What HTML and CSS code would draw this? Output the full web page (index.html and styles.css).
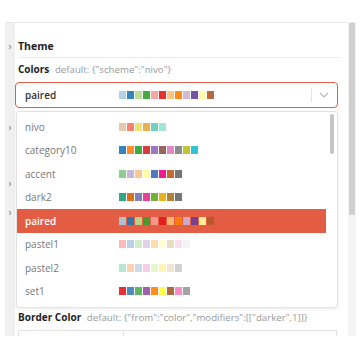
FILE: index.html
```html
<!DOCTYPE html>
<html lang="en">
<head>
    <meta charset="UTF-8">
    <meta name="viewport" content="width=device-width, initial-scale=1.0">
    <title>Theme colors</title>
    <link rel="stylesheet" href="styles.css">
</head>
<body>

    <div class="panel">
        <div class="gutter">
            <span class="arrow a1">›</span>
            <span class="arrow a2">›</span>
            <span class="arrow a3">›</span>
            <span class="arrow a4">›</span>
        </div>

        <div class="content">
            <div class="section-title">Theme</div>

            <div class="field">
                <div class="field-label">Colors <span class="default">default: {"scheme":"nivo"}</span></div>

                <div class="select">
                    <span class="select-value">paired</span>
                    <span class="swatches">
                        <i style="background:#a6cee3"></i><i style="background:#1f78b4"></i><i style="background:#b2df8a"></i><i style="background:#33a02c"></i><i style="background:#fb9a99"></i><i style="background:#e31a1c"></i><i style="background:#fdbf6f"></i><i style="background:#ff7f00"></i><i style="background:#cab2d6"></i><i style="background:#6a3d9a"></i><i style="background:#ffff99"></i><i style="background:#b15928"></i>
                    </span>
                    <span class="select-sep"></span>
                    <svg class="chevron" width="10" height="6" viewBox="0 0 10 6"><path d="M1 1l4 4 4-4" fill="none" stroke="#bbb" stroke-width="1.2"/></svg>
                </div>

                <div class="menu">
                    <div class="menu-list">
                        <div class="option"><span class="name">nivo</span><span class="swatches"><i style="background:#e8c1a0"></i><i style="background:#f47560"></i><i style="background:#f1e15b"></i><i style="background:#e8a838"></i><i style="background:#61cdbb"></i><i style="background:#97e3d5"></i></span></div>
                        <div class="option"><span class="name">category10</span><span class="swatches"><i style="background:#1f77b4"></i><i style="background:#ff7f0e"></i><i style="background:#2ca02c"></i><i style="background:#d62728"></i><i style="background:#9467bd"></i><i style="background:#8c564b"></i><i style="background:#e377c2"></i><i style="background:#7f7f7f"></i><i style="background:#bcbd22"></i><i style="background:#17becf"></i></span></div>
                        <div class="option"><span class="name">accent</span><span class="swatches"><i style="background:#7fc97f"></i><i style="background:#beaed4"></i><i style="background:#fdc086"></i><i style="background:#ffff99"></i><i style="background:#386cb0"></i><i style="background:#f0027f"></i><i style="background:#bf5b17"></i><i style="background:#666666"></i></span></div>
                        <div class="option"><span class="name">dark2</span><span class="swatches"><i style="background:#1b9e77"></i><i style="background:#d95f02"></i><i style="background:#7570b3"></i><i style="background:#e7298a"></i><i style="background:#66a61e"></i><i style="background:#e6ab02"></i><i style="background:#a6761d"></i><i style="background:#666666"></i></span></div>
                        <div class="option selected"><span class="name">paired</span><span class="swatches"><i style="background:#a6cee3"></i><i style="background:#1f78b4"></i><i style="background:#b2df8a"></i><i style="background:#33a02c"></i><i style="background:#fb9a99"></i><i style="background:#e31a1c"></i><i style="background:#fdbf6f"></i><i style="background:#ff7f00"></i><i style="background:#cab2d6"></i><i style="background:#6a3d9a"></i><i style="background:#ffff99"></i><i style="background:#b15928"></i></span></div>
                        <div class="option"><span class="name">pastel1</span><span class="swatches"><i style="background:#fbb4ae"></i><i style="background:#b3cde3"></i><i style="background:#ccebc5"></i><i style="background:#decbe4"></i><i style="background:#fed9a6"></i><i style="background:#ffffcc"></i><i style="background:#e5d8bd"></i><i style="background:#fddaec"></i><i style="background:#f2f2f2"></i></span></div>
                        <div class="option"><span class="name">pastel2</span><span class="swatches"><i style="background:#b3e2cd"></i><i style="background:#fdcdac"></i><i style="background:#cbd5e8"></i><i style="background:#f4cae4"></i><i style="background:#e6f5c9"></i><i style="background:#fff2ae"></i><i style="background:#f1e2cc"></i><i style="background:#cccccc"></i></span></div>
                        <div class="option"><span class="name">set1</span><span class="swatches"><i style="background:#e41a1c"></i><i style="background:#377eb8"></i><i style="background:#4daf4a"></i><i style="background:#984ea3"></i><i style="background:#ff7f00"></i><i style="background:#ffff33"></i><i style="background:#a65628"></i><i style="background:#f781bf"></i><i style="background:#999999"></i></span></div>
                    </div>
                    <div class="menu-scroll"><div class="menu-thumb"></div></div>
                </div>
            </div>

            <!-- fields hidden under the open menu -->
            <div class="hidden-fields"></div>

            <div class="field-label">Border Color <span class="default">default: {"from":"color","modifiers":[["darker",1]]}</span></div>
            <div class="border-controls">
                <div class="control small"></div>
                <div class="control wide"></div>
            </div>
        </div>

        <div class="scrollbar"><div class="thumb"></div></div>
    </div>

</body>
</html>
```

FILE: styles.css
```css
body {
    margin: 0;
    background: #fff;
    font-family: "Open Sans", Arial, sans-serif;
}

.panel {
    display: flex;
    margin: 22px 0 0 5px;
    width: 351px;
    height: 313px;
    border-top: 1px solid #e8e8e8;
    overflow: hidden;
}

.gutter {
    width: 10px;
    background: #f0f0f0;
    display: flex;
    flex-direction: column;
    align-items: center;
    color: #777;
    font-size: 10px;
    line-height: 10px;
}

.arrow.a1 { margin-top: 18px; }
.arrow.a2 { margin-top: 71px; }
.arrow.a3 { margin-top: 46px; }
.arrow.a4 { margin-top: 19px; }

.content {
    flex: 1;
    padding: 0 0 0 3px;
}

.section-title {
    height: 34px;
    line-height: 46px;
    font-size: 10.5px;
    font-weight: 700;
    color: #222;
    border-bottom: 1px solid #ececec;
    margin-right: 6px;
}

.field {
    position: relative;
}

.field-label {
    font-size: 10px;
    font-weight: 700;
    color: #222;
    line-height: 14px;
}

.field .field-label {
    margin-top: 4px;
}

.default {
    font-size: 9.7px;
    font-weight: 400;
    color: #9a9a9a;
    margin-left: 3px;
}

.select {
    display: flex;
    align-items: center;
    height: 24px;
    margin: 5px 0 0 -3px;
    width: 321px;
    border: 1px solid #e25d47;
    border-radius: 4px;
    font-size: 10px;
    font-weight: 600;
    color: #333;
}

.select-value {
    width: 94px;
    padding-left: 9px;
}

.select-sep {
    margin-left: auto;
    width: 1px;
    height: 14px;
    background: #e4e4e4;
}

.chevron {
    margin: 0 8px 0 7px;
}

.swatches {
    display: flex;
}

.swatches i {
    width: 7px;
    height: 8px;
    margin-right: 1px;
    opacity: 0.9;
}

.menu {
    position: absolute;
    top: 49px;
    left: -2px;
    width: 322px;
    height: 197px;
    display: flex;
    background: #fff;
    border: 1px solid #e2e2e2;
    border-radius: 3px;
    box-shadow: 0 1px 4px rgba(0, 0, 0, 0.08);
    box-sizing: border-box;
}

.menu-list {
    flex: 1;
    padding-top: 3px;
}

.option {
    display: flex;
    align-items: center;
    height: 23.5px;
    font-size: 10px;
    color: #777;
}

.option .name {
    width: 94px;
    padding-left: 8px;
}

.option.selected {
    background: #e35c44;
    color: #fff;
    font-weight: 600;
}

.menu-scroll {
    width: 11px;
    padding-top: 2px;
    display: flex;
    justify-content: center;
}

.menu-thumb {
    width: 4px;
    height: 40px;
    border-radius: 2px;
    background: #c4c4c4;
}

.hidden-fields {
    height: 202px;
}

.border-controls {
    display: flex;
    margin-top: 5px;
    width: 319px;
}

.control {
    height: 20px;
    border: 1px solid #e2e2e2;
}

.control.small {
    width: 104px;
}

.control.wide {
    flex: 1;
    border-left: none;
}

.scrollbar {
    width: 8px;
    margin-left: 2px;
    background: #f4f4f4;
}

.thumb {
    width: 6px;
    height: 192px;
    margin: 0 auto;
    background: #cfcfcf;
    border-radius: 1px;
}
```
